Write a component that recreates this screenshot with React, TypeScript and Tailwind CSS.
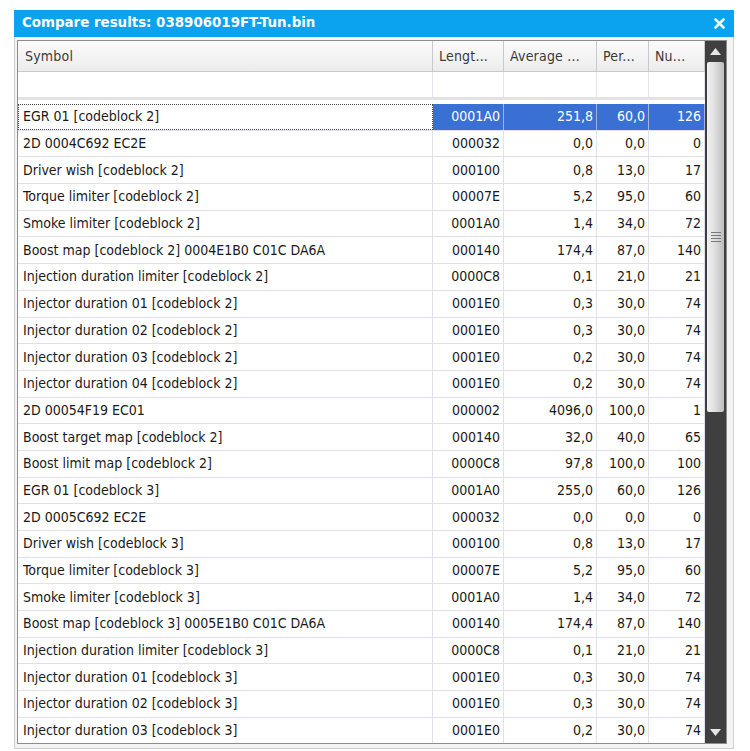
import React from "react";

type Row = [string, string, string, string, string];

const rows: Row[] = [
  ["EGR 01 [codeblock 2]", "0001A0", "251,8", "60,0", "126"],
  ["2D 0004C692 EC2E", "000032", "0,0", "0,0", "0"],
  ["Driver wish [codeblock 2]", "000100", "0,8", "13,0", "17"],
  ["Torque limiter [codeblock 2]", "00007E", "5,2", "95,0", "60"],
  ["Smoke limiter [codeblock 2]", "0001A0", "1,4", "34,0", "72"],
  ["Boost map [codeblock 2] 0004E1B0 C01C DA6A", "000140", "174,4", "87,0", "140"],
  ["Injection duration limiter [codeblock 2]", "0000C8", "0,1", "21,0", "21"],
  ["Injector duration 01 [codeblock 2]", "0001E0", "0,3", "30,0", "74"],
  ["Injector duration 02 [codeblock 2]", "0001E0", "0,3", "30,0", "74"],
  ["Injector duration 03 [codeblock 2]", "0001E0", "0,2", "30,0", "74"],
  ["Injector duration 04 [codeblock 2]", "0001E0", "0,2", "30,0", "74"],
  ["2D 00054F19 EC01", "000002", "4096,0", "100,0", "1"],
  ["Boost target map [codeblock 2]", "000140", "32,0", "40,0", "65"],
  ["Boost limit map [codeblock 2]", "0000C8", "97,8", "100,0", "100"],
  ["EGR 01 [codeblock 3]", "0001A0", "255,0", "60,0", "126"],
  ["2D 0005C692 EC2E", "000032", "0,0", "0,0", "0"],
  ["Driver wish [codeblock 3]", "000100", "0,8", "13,0", "17"],
  ["Torque limiter [codeblock 3]", "00007E", "5,2", "95,0", "60"],
  ["Smoke limiter [codeblock 3]", "0001A0", "1,4", "34,0", "72"],
  ["Boost map [codeblock 3] 0005E1B0 C01C DA6A", "000140", "174,4", "87,0", "140"],
  ["Injection duration limiter [codeblock 3]", "0000C8", "0,1", "21,0", "21"],
  ["Injector duration 01 [codeblock 3]", "0001E0", "0,3", "30,0", "74"],
  ["Injector duration 02 [codeblock 3]", "0001E0", "0,3", "30,0", "74"],
  ["Injector duration 03 [codeblock 3]", "0001E0", "0,2", "30,0", "74"],
];

const cols = "grid-cols-[415px_71px_93px_52px_56px]";

function HeaderCell({ label, first }: { label: string; first?: boolean }) {
  return (
    <div
      className={
        "flex items-center border-r border-[#c9c9c9] px-[6px] tracking-[0.2px] " +
        (first ? "pl-[7px]" : "")
      }
    >
      {label}
    </div>
  );
}

export default function App() {
  return (
    <div
      className="h-[751px] w-[750px] bg-white pl-[14px] pt-[10px] text-[14px] text-[#1a1a1a]"
      style={{ fontFamily: "'DejaVu Sans Condensed', 'Liberation Sans', sans-serif" }}
    >
      <div className="w-[720px]">
        {/* title bar */}
        <div className="flex h-[27px] items-center justify-between bg-[#0ba2ef] pl-[8px] pr-[9px] font-bold text-white">
          <span className="text-[13.4px] [font-family:'DejaVu_Sans',sans-serif]">
            Compare results: 038906019FT-Tun.bin
          </span>
          <svg width="11" height="11" viewBox="0 0 11 11">
            <path d="M1.5 1.5 L9.5 9.5 M9.5 1.5 L1.5 9.5" stroke="#eef8ff" strokeWidth="2.6" strokeLinecap="round" />
          </svg>
        </div>

        {/* body */}
        <div className="h-[712px] border border-t-0 border-[#cfcfcf] bg-[#f4f4f4] pl-[2px] pr-[6px] pt-[3px]">
          <div className="flex h-[704px] border border-[#8d8d8d] bg-white">
            <div className="w-[687px] overflow-hidden">
              {/* header */}
              <div className={"grid h-[31px] border-b border-[#c9c9c9] bg-gradient-to-b from-[#fbfbfb] to-[#ececec] text-[#3a3a3a] " + cols}>
                <HeaderCell label="Symbol" first />
                <HeaderCell label="Lengt..." />
                <HeaderCell label="Average ..." />
                <HeaderCell label="Per..." />
                <HeaderCell label="Nu..." />
              </div>
              {/* filter row */}
              <div className={"grid h-[28px] border-b-[3px] border-[#e2e2e2] " + cols}>
                <div className="border-r border-[#e4e4ee]" />
                <div className="border-r border-[#e4e4ee]" />
                <div className="border-r border-[#e4e4ee]" />
                <div className="border-r border-[#e4e4ee]" />
                <div className="border-r border-[#e4e4ee]" />
              </div>
              {/* rows */}
              <div className="pt-[4px]">
                {rows.map((r, i) => {
                  const sel = i === 0;
                  return (
                    <div
                      key={i}
                      className={"grid h-[26.7px] border-b border-[#e1e1ec] " + cols}
                    >
                      <div
                        className={
                          "flex items-center overflow-hidden whitespace-nowrap pl-[5px] " +
                          (sel
                            ? "outline-1 -outline-offset-1 outline-dotted outline-[#444]"
                            : "border-r border-[#e1e1ec]")
                        }
                      >
                        {r[0]}
                      </div>
                      {r.slice(1).map((v, j) => (
                        <div
                          key={j}
                          className={
                            "flex items-center justify-end border-r pr-[3px] " +
                            (sel
                              ? "border-[#9fb4e0] bg-[#3a6fd4] text-white"
                              : "border-[#e1e1ec]")
                          }
                        >
                          {v}
                        </div>
                      ))}
                    </div>
                  );
                })}
              </div>
            </div>

            {/* scrollbar */}
            <div className="flex w-[21px] flex-col bg-[#3f3f3f]">
              <div className="flex h-[21px] items-center justify-center">
                <svg width="11" height="7" viewBox="0 0 11 7">
                  <path d="M0 7 L5.5 0 L11 7 Z" fill="#e6e6e6" />
                </svg>
              </div>
              <div className="mx-[2px] flex h-[350px] items-center justify-center rounded-[2px] bg-gradient-to-r from-[#f2f2f2] via-[#dcdcdc] to-[#bdbdbd]">
                <div className="flex w-[10px] flex-col gap-[2px]">
                  <div className="h-px bg-[#7a7a7a]" />
                  <div className="h-px bg-[#7a7a7a]" />
                  <div className="h-px bg-[#7a7a7a]" />
                  <div className="h-px bg-[#7a7a7a]" />
                </div>
              </div>
              <div className="flex-1" />
              <div className="flex h-[21px] items-center justify-center">
                <svg width="11" height="7" viewBox="0 0 11 7">
                  <path d="M0 0 L11 0 L5.5 7 Z" fill="#e6e6e6" />
                </svg>
              </div>
            </div>
          </div>
        </div>
      </div>
    </div>
  );
}
